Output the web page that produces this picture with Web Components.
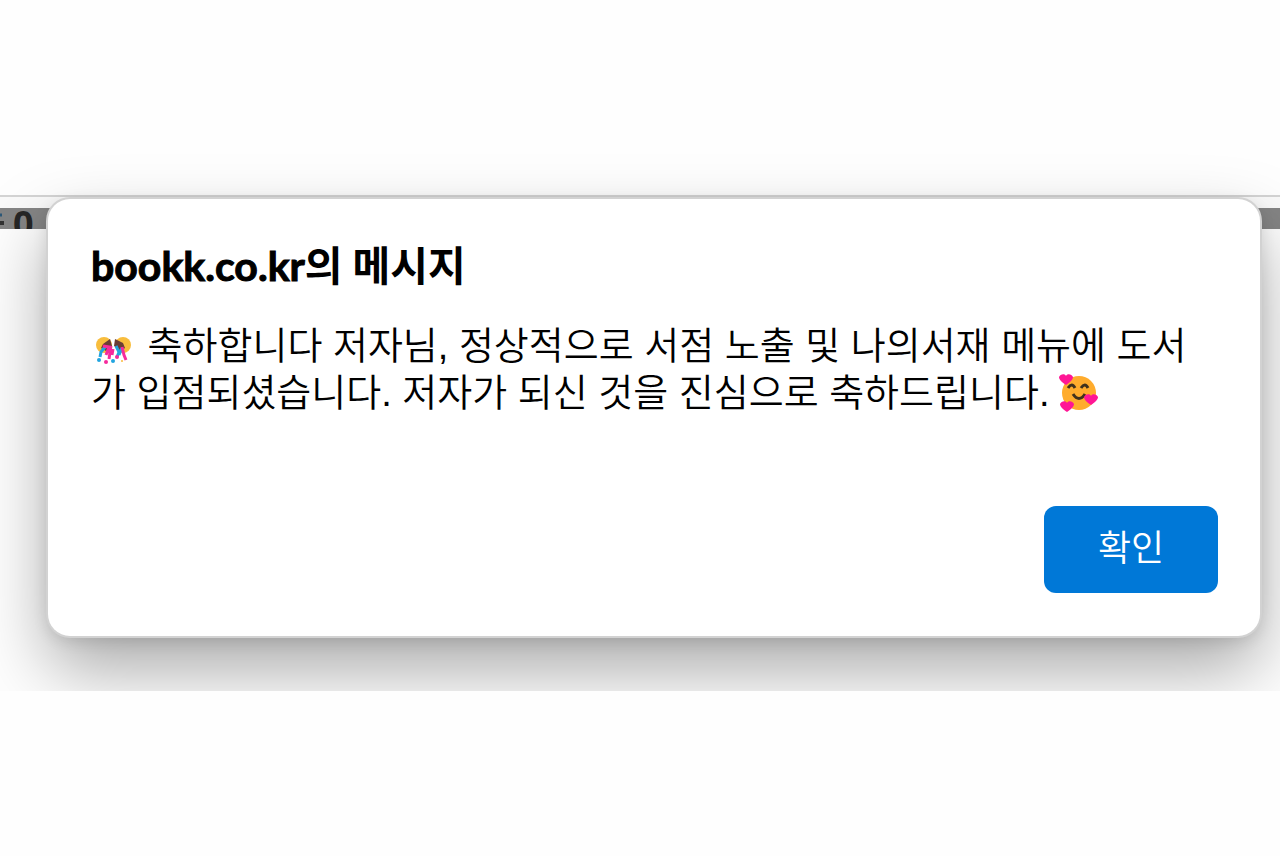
<!DOCTYPE html>
<html lang="ko">
<head>
<meta charset="utf-8">
<meta name="viewport" content="width=device-width, initial-scale=1">
<title>bookk.co.kr</title>
<style>
  body {
    margin: 0;
    background: #fefefe;
    color: #000;
    font-family: "Liberation Sans", "Noto Sans CJK KR", sans-serif;
  }
  .domain {
    -webkit-text-stroke: 1px #000;
  }
</style>
</head>
<body>
<page-stage>
  <page-backdrop slot="backdrop">0</page-backdrop>
  <alert-dialog>
    <span slot="title"><span class="domain">bookk.co.kr</span>의 메시지</span>
    <emoji-icon name="party"></emoji-icon> 축하합니다 저자님, 정상적으로 서점 노출 및 나의서재 메뉴에 도서<br>가 입점되셨습니다. 저자가 되신 것을 진심으로 축하드립니다. <emoji-icon name="love"></emoji-icon>
    <span slot="action">확인</span>
  </alert-dialog>
</page-stage>

<script>
// window area: backdrop and dialog share one grid cell
class PageStage extends HTMLElement {
  constructor() {
    super();
    this.attachShadow({ mode: "open" });
    this.shadowRoot.innerHTML = `
      <style>
        :host {
          display: grid;
          grid-template-columns: minmax(0, 1fr);
          overflow: hidden;
        }
        .layer {
          grid-area: 1 / 1;
        }
        .front {
          padding: 199px 20px 55px 48px;
        }
      </style>
      <div class="layer"><slot name="backdrop"></slot></div>
      <div class="layer front"><slot></slot></div>
    `;
  }
}

// the dimmed site header that peeks out behind the dialog
class PageBackdrop extends HTMLElement {
  constructor() {
    super();
    this.attachShadow({ mode: "open" });
    this.shadowRoot.innerHTML = `
      <style>
        :host {
          display: block;
          padding-top: 195px;
        }
        .toolbar {
          height: 11px;
          border-top: 2px solid #d4d4d4;
          background: #fafafa;
        }
        .site {
          display: flex;
          gap: 8px;
          height: 21px;
          overflow: hidden;
          background: #858585;
          color: #262626;
          font: bold 36px/32px "Open Sans", sans-serif;
        }
        svg {
          flex: none;
        }
      </style>
      <div class="toolbar"></div>
      <div class="site">
        <svg width="5" height="21" aria-hidden="true">
          <path d="M0 7h2" stroke="#2c5878" stroke-width="3"/>
          <path d="M0 15h4" stroke="#333" stroke-width="4"/>
        </svg>
        <span><slot></slot></span>
      </div>
    `;
  }
}

class AlertDialog extends HTMLElement {
  constructor() {
    super();
    this.attachShadow({ mode: "open" });
    this.shadowRoot.innerHTML = `
      <style>
        :host {
          display: block;
        }
        section {
          display: flex;
          flex-direction: column;
          padding: 39px 42px 43px 43px;
          border-radius: 22px;
          background: #fff;
          box-shadow:
            0 0 0 2px #d2d2d2,
            0 4px 16px rgba(0, 0, 0, 0.12),
            0 33px 70px rgba(0, 0, 0, 0.34);
        }
        h1 {
          margin: 0;
          font: bold 41px/56px Lato, "Noto Sans CJK KR", sans-serif;
        }
        p {
          margin: 29px 0 89px;
          font-size: 38px;
          font-weight: 350;
          line-height: 47px;
        }
        button {
          align-self: flex-end;
          min-width: 174px;
          height: 87px;
          padding: 0 48px 10px;
          border: 0;
          border-radius: 12px;
          background: #0078d7;
          color: #fff;
          font: 350 36px/48px "Noto Sans CJK KR", sans-serif;
        }
      </style>
      <section role="alertdialog" aria-labelledby="title" aria-describedby="message">
        <h1 id="title"><slot name="title"></slot></h1>
        <p id="message"><slot></slot></p>
        <button type="button"><slot name="action"></slot></button>
      </section>
    `;
  }

  connectedCallback() {
    this._button = this.shadowRoot.querySelector("button");
    this._button.addEventListener("click", this._confirm.bind(this));
  }

  _confirm() {
    this.dispatchEvent(new CustomEvent("confirm", { bubbles: true }));
    this.hidden = true;
  }
}

const HEART = "M0 5C-4 2-7 0-7-3-6-6-1-7 0-4 1-7 6-6 7-3 7 0 4 2 0 5Z";

const EMOJI = {
  party: `
    <g fill="#f8bd3d">
      <circle cx="8" cy="12" r="8"/>
      <circle cx="27" cy="12" r="8"/>
    </g>
    <path d="M7 11l7-5 2 7-6 5-5-3zM19 6l8 4 2 5-4 3-7-5z" fill="#6b3d35"/>
    <g fill="none" stroke-width="2">
      <path d="M9 14l-4 5-1 5M20 13l3 6-2 5M26 15l-3 7" stroke="#22a5e0" stroke-width="3"/>
      <path d="M7 13l6 1-3 8M15 13l-2 13M17 16l-1 6M26 14l2 8 2 5" stroke="#f52a9d" stroke-width="3"/>
    </g>
    <g fill="#22a5e0"><circle cx="3" cy="27" r="2"/><circle cx="17" cy="28" r="2"/></g>
    <g fill="#f52a9d"><circle cx="10" cy="29" r="2"/><circle cx="21" cy="24" r="2"/></g>
    <circle cx="26" cy="28" r="1" fill="#f8bd3d"/>
  `,
  love: `
    <circle cx="19" cy="17" r="17" fill="#ffac2d"/>
    <g fill="none" stroke="#40311d" stroke-width="3">
      <path d="M8 12q4-6 7 0M21 12q4-6 7 0M13 18q6 9 12 0"/>
    </g>
    <g fill="#ff1695">
      <path d="${HEART}" transform="translate(6 4)"/>
      <path d="${HEART}" transform="translate(31 24)"/>
      <path d="${HEART}" transform="translate(7 31)"/>
    </g>
  `,
};

class EmojiIcon extends HTMLElement {
  constructor() {
    super();
    this.attachShadow({ mode: "open" });
  }

  connectedCallback() {
    const name = this.getAttribute("name");
    const party = name === "party";
    const height = party ? 26 : 30;
    this.shadowRoot.innerHTML = `
      <style>
        :host {
          display: inline-block;
          height: ${height}px;
          padding: 0 ${party ? "6px 0 5px" : "0"};
          line-height: 0;
        }
        svg {
          overflow: visible;
        }
      </style>
      <svg width="${party ? 35 : 38}" height="${height}" role="img" aria-label="${party ? "축하" : "사랑"}">
        ${EMOJI[name]}
      </svg>
    `;
  }
}

customElements.define("page-stage", PageStage);
customElements.define("page-backdrop", PageBackdrop);
customElements.define("alert-dialog", AlertDialog);
customElements.define("emoji-icon", EmojiIcon);
</script>
</body>
</html>
